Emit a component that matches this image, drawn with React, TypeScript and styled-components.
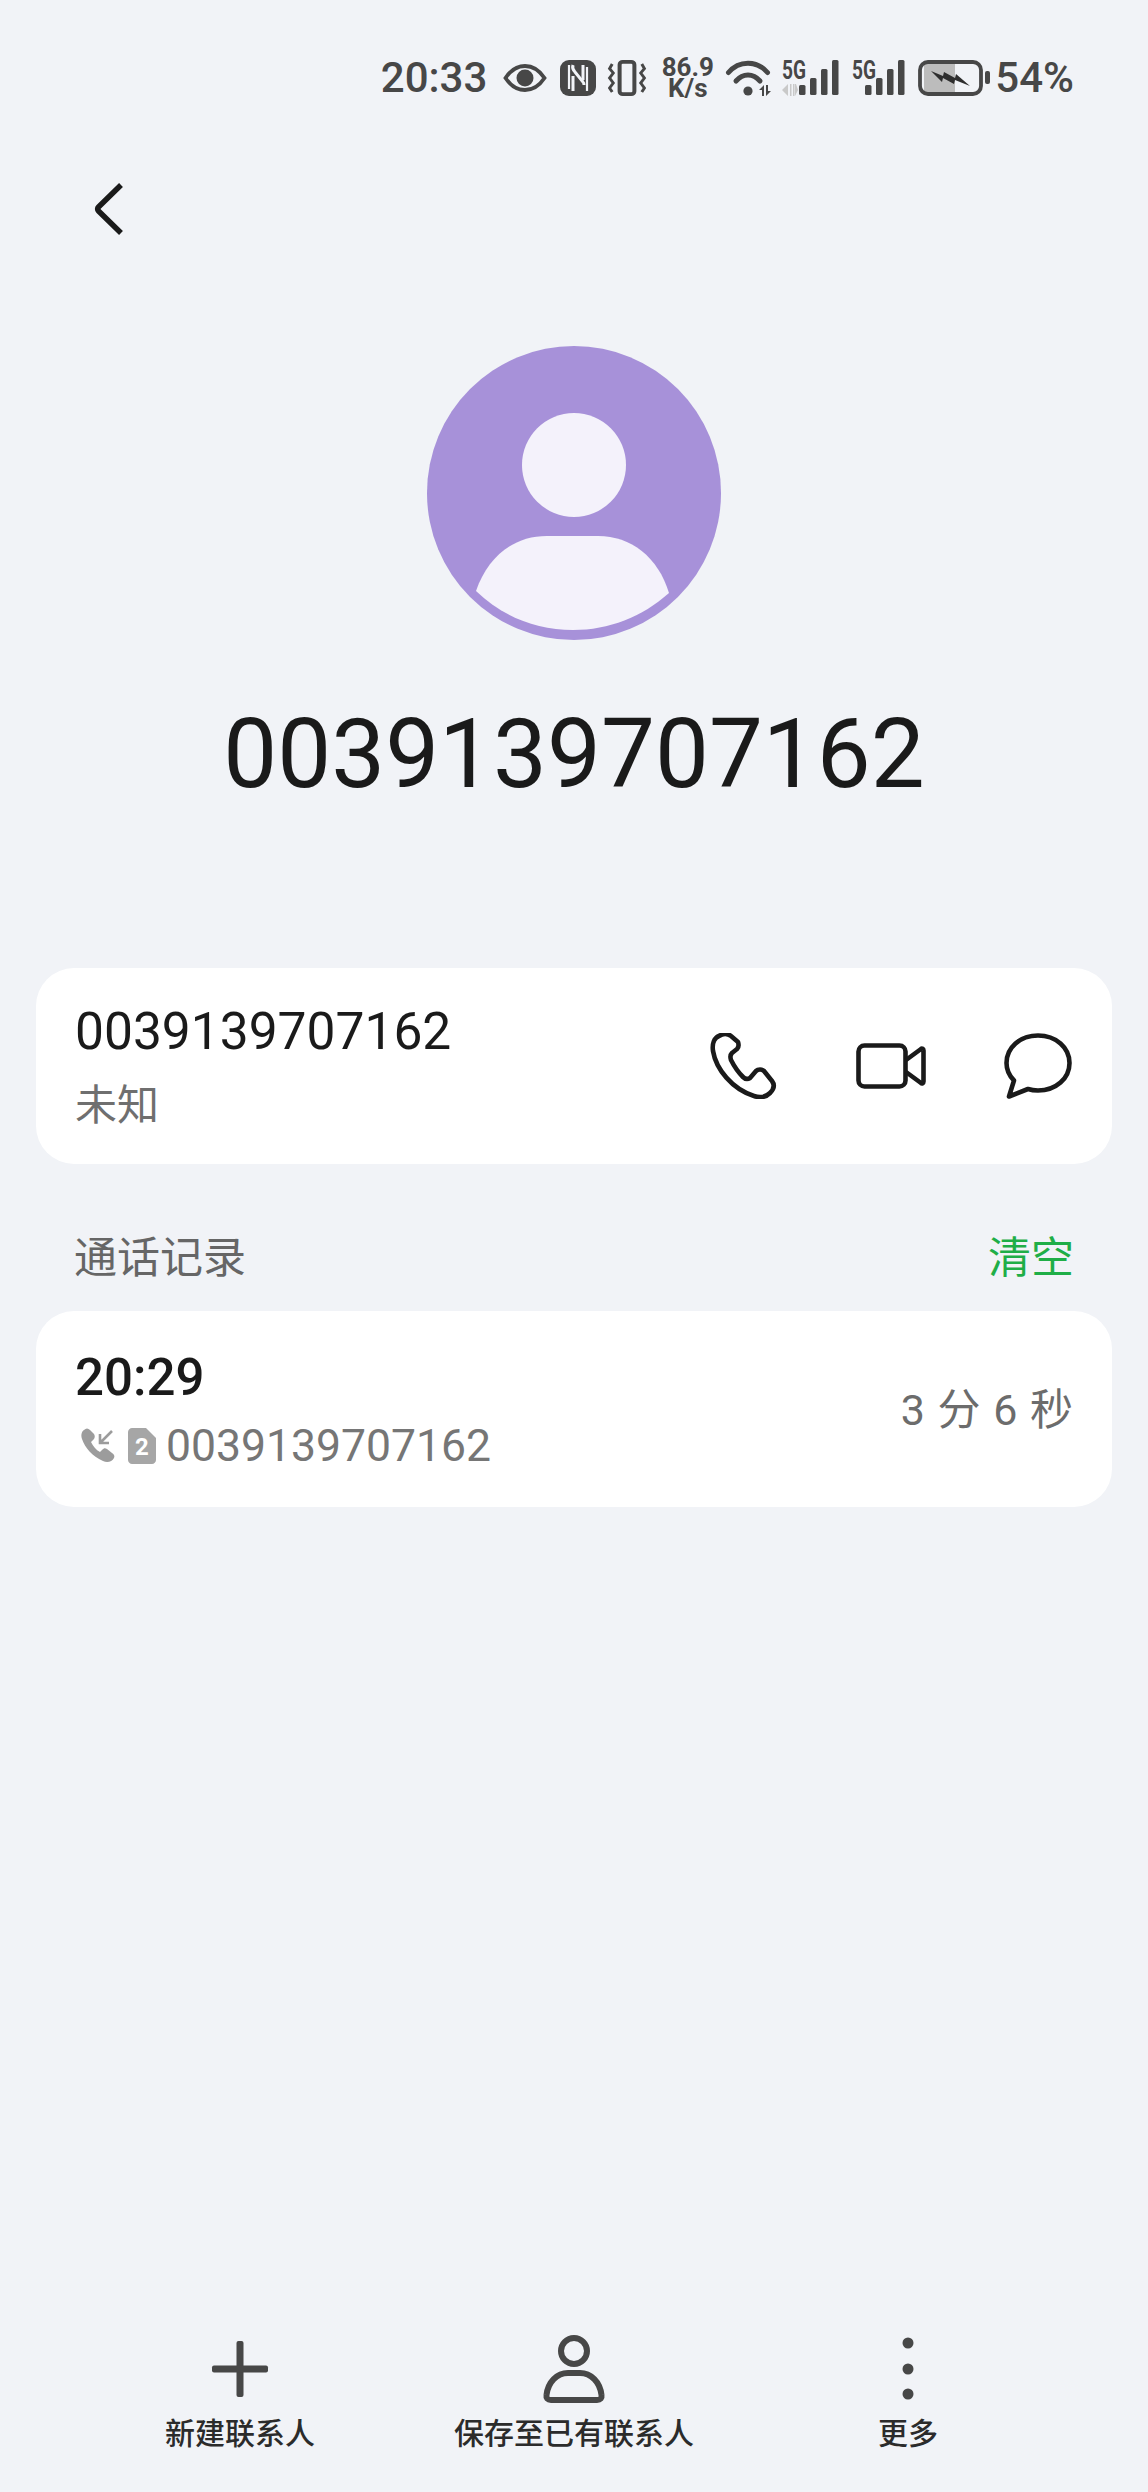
import React from "react";
import styled, { createGlobalStyle } from "styled-components";

const GlobalStyle = createGlobalStyle`
  html, body {
    margin: 0;
    padding: 0;
    background: #f1f3f7;
  }
  * {
    box-sizing: border-box;
  }
`;

const INK = "#1a1a1a";
const STATUS = "#474747";
const FONT = `Roboto, "Noto Sans CJK SC", sans-serif`;

const Page = styled.div`
  width: 1148px;
  height: 2492px;
  background: #f1f3f7;
  font-family: ${FONT};
  display: flex;
  flex-direction: column;
  overflow: hidden;
`;

const StatusBar = styled.div`
  height: 38px;
  margin-top: 59px;
  padding-right: 74px;
  display: flex;
  justify-content: flex-end;
  align-items: center;
  color: ${STATUS};
`;

const StatusText = styled.span<{ $left?: number }>`
  font-size: 42px;
  font-weight: 500;
  line-height: 38px;
  margin-left: ${(p) => p.$left ?? 0}px;
`;

const StatusIcon = styled.svg<{ $left: number }>`
  display: block;
  flex: none;
  overflow: visible;
  margin-left: ${(p) => p.$left}px;
`;

const Speed = styled.div`
  width: 51px;
  margin-left: 16px;
  display: flex;
  flex-direction: column;
  align-items: center;
  font-size: 26px;
  font-weight: 700;
  line-height: 21px;
`;

const BackButton = styled.button`
  width: 30px;
  height: 54px;
  margin: 85px 0 0 94px;
  padding: 0;
  border: 0;
  background: none;
  display: block;
`;

const Profile = styled.section`
  margin-top: 110px;
  display: flex;
  flex-direction: column;
  align-items: center;
`;

const Avatar = styled.svg`
  display: block;
  width: 294px;
  height: 294px;
`;

const Name = styled.h1`
  margin: 64px 0 0;
  font-size: 96px;
  font-weight: 400;
  line-height: 100px;
  color: ${INK};
`;

const Card = styled.div`
  margin: 0 36px;
  height: 196px;
  padding: 0 39px;
  border-radius: 38px;
  background: #fff;
  display: flex;
  justify-content: space-between;
  align-items: center;
`;

const ContactCard = styled(Card)`
  margin-top: 164px;
`;

const Stack = styled.div`
  display: flex;
  flex-direction: column;
`;

const ContactNumber = styled.div`
  font-size: 51.5px;
  line-height: 60px;
  color: ${INK};
`;

const ContactLabel = styled.div`
  margin-top: 19px;
  font-size: 42px;
  line-height: 50px;
  color: #6f6f6f;
`;

const Actions = styled.div`
  display: flex;
  align-items: center;
  gap: 78px;
  margin-right: 1px;
`;

const SectionHeader = styled.div`
  margin-top: 65px;
  padding: 0 74px;
  display: flex;
  justify-content: space-between;
  align-items: center;
  height: 50px;
  font-size: 43px;
`;

const SectionTitle = styled.span`
  color: #666;
`;

const ClearLink = styled.span`
  color: #1fae47;
`;

const RecordCard = styled(Card)`
  margin-top: 32px;
`;

const RecordTime = styled.div`
  font-size: 51px;
  font-weight: 500;
  line-height: 56px;
  color: ${INK};
`;

const RecordRow = styled.div`
  margin-top: 18px;
  display: flex;
  align-items: center;
  height: 44px;
  color: #767676;
  font-size: 44.5px;
`;

const RecordNumber = styled.span`
  margin-left: 10px;
`;

const Duration = styled.div`
  margin-top: -6px;
  font-size: 43px;
  color: #6c6c6c;
  word-spacing: 2px;
`;

const Toolbar = styled.nav`
  margin-top: auto;
  margin-bottom: 41px;
  padding: 0 73px;
  display: grid;
  grid-template-columns: repeat(3, 1fr);
`;

const ToolItem = styled.div`
  display: flex;
  flex-direction: column;
  align-items: center;
`;

const ToolIcon = styled.svg`
  display: block;
  width: 70px;
  height: 70px;
  color: ${STATUS};
`;

const ToolLabel = styled.span`
  margin-top: 12px;
  font-size: 30px;
  font-weight: 500;
  line-height: 34px;
  color: #2b2b2b;
`;

const Signal = ({ left, width, offset, muted }: { left: number; width: number; offset: number; muted?: boolean }) => (
  <StatusIcon $left={left} width={width} height={36} viewBox={`0 0 ${width} 36`} fill={STATUS}>
    <text x="0" y="19" fontFamily="Roboto" fontWeight="700" fontSize="25" textLength="24" lengthAdjust="spacingAndGlyphs">
      5G
    </text>
    {muted && <path d="M0 30l6-6v12zM8 24h1.5v12H8zM11 24h1.5v12H11zM14 24l-1 0v12l3-6z" fill="#c9c9c9" />}
    <rect x={offset} y="25" width="6.5" height="10" rx="1.5" />
    <rect x={offset + 11} y="18" width="6.5" height="17" rx="1.5" />
    <rect x={offset + 22} y="9" width="6.5" height="26" rx="1.5" />
    <rect x={offset + 33} y="0" width="6.5" height="35" rx="1.5" />
  </StatusIcon>
);

const App = () => {
  return (
    <Page>
      <GlobalStyle />
      <StatusBar>
        <StatusText>20:33</StatusText>
        <StatusIcon $left={16} width={44} height={28} viewBox="0 0 43 28">
          <path d="M2 14C8 5 14 2 21.5 2S35 5 41 14C35 23 29 26 21.5 26S8 23 2 14Z" fill="none" stroke={STATUS} strokeWidth="3.8" />
          <circle cx="21.5" cy="14" r="8.5" fill={STATUS} />
        </StatusIcon>
        <StatusIcon $left={13} width={36} height={36} viewBox="0 0 36 36">
          <rect x="0" y="0" width="36" height="36" rx="9" fill={STATUS} />
          <path d="M9 5V29M27 7V31" stroke="#f1f3f7" strokeWidth="2.2" fill="none" />
          <path d="M13 5c-1 3 0 5 2 7l8 10c1 1 1 2 1 3" stroke="#f1f3f7" strokeWidth="3" fill="none" />
          <path d="M13 16V31M23 5V20" stroke="#f1f3f7" strokeWidth="3" fill="none" />
        </StatusIcon>
        <StatusIcon $left={12} width={38} height={36} viewBox="0 0 36 36" preserveAspectRatio="none" fill="none" stroke={STATUS}>
          <rect x="11" y="1.8" width="14" height="32.4" rx="3" strokeWidth="3.8" />
          <path d="M4 4L1.5 8.5 5 13 1.5 18 5 23 1.5 28 4 32M32 4l2.5 4.500-3.500 4.500 3.500 5-3.500 5 3.500 5-2.500 4" strokeWidth="2.8" />
        </StatusIcon>
        <Speed>
          <span>86.9</span>
          <span>K/s</span>
        </Speed>
        <StatusIcon $left={13} width={46} height={36} viewBox="0 0 46 36" fill="none" stroke={STATUS}>
          <path d="M2.500 12.500C13 0 31 0 41.500 12.500" strokeWidth="5" strokeLinecap="round" />
          <path d="M10 21C17 13 27 13 34 21" strokeWidth="5" strokeLinecap="round" />
          <circle cx="22" cy="31" r="4.600" fill={STATUS} stroke="none" />
          <path d="M33 30l5-5v11h-2v-6zM40 25h2v6h3l-5 5z" fill={STATUS} stroke="none" />
        </StatusIcon>
        <Signal left={10} width={58} offset={17} muted />
        <Signal left={12} width={53} offset={13} />
        <StatusIcon $left={13} width={72} height={36} viewBox="0 0 72 36">
          <path d="M6 4h31v28H6z" fill="#bcbcbc" />
          <rect x="2" y="2" width="61" height="32" rx="8" fill="none" stroke={STATUS} strokeWidth="3.800" />
          <path d="M13 11l12 5 1-4 11 6 1-4 14 12-15-6-1 4-11-6-1 4z" fill="#2e2e2e" />
          <rect x="67" y="11" width="5" height="13" rx="2" fill={STATUS} />
        </StatusIcon>
        <StatusText $left={5}>54%</StatusText>
      </StatusBar>

      <BackButton aria-label="返回">
        <svg width="30" height="54" viewBox="0 0 30 54" fill="none">
          <path d="M27 3L4.500 25c-1.200 1.200-1.200 2.800 0 4L27 51" stroke={INK} strokeWidth="5.500" />
        </svg>
      </BackButton>

      <Profile>
        <Avatar viewBox="0 0 294 294">
          <circle cx="147" cy="147" r="147" fill="#a791d9" />
          <circle cx="147" cy="119" r="52" fill="#f4f2fb" />
          <path d="M49 245C61 210 87 190 120 190H171C204 190 231 211 242 247C215 271 182 284 146 284C109 284 75 270 49 245Z" fill="#f4f2fb" />
        </Avatar>
        <Name>0039139707162</Name>
      </Profile>

      <ContactCard>
        <Stack>
          <ContactNumber>0039139707162</ContactNumber>
          <ContactLabel>未知</ContactLabel>
        </Stack>
        <Actions>
          <svg width="68" height="66" viewBox="0 0 68 66" fill="none" stroke={INK} strokeWidth="4.600" strokeLinejoin="round">
            <path d="M9 3C4 5 2 11 3 18C6 36 22 56 44 63C50 65 56 64 60 60C64 56 65 52 62 48L54 38C52 36 48 36 46 38L40 45C37 47 35 46 33 44C28 39 24 33 21 27C20 24 20 22 22 20L27 16C29 14 29 12 28 9L21 3C17 0 12 1 9 3Z" />
          </svg>
          <svg width="70" height="46" viewBox="0 0 70 46" fill="none" stroke={INK} strokeWidth="4.600" strokeLinejoin="round">
            <rect x="2.500" y="2.500" width="47" height="41" rx="6" />
            <path d="M50 17L65 6C66 5 67.500 6 67.500 7.500V38.500C67.500 40 66 41 65 40L50 29" />
          </svg>
          <svg width="68" height="66" viewBox="0 0 68 66" fill="none" stroke={INK} strokeWidth="4.600" strokeLinejoin="round">
            <path d="M34 2.500C16 2.500 2.500 14.500 2.500 30C2.500 37 5.500 43 10 47.500L5 63.500L24 56C27 57 30.500 57.500 34 57.500C52 57.500 65.500 45.500 65.500 30C65.500 14.500 52 2.500 34 2.500Z" />
          </svg>
        </Actions>
      </ContactCard>

      <SectionHeader>
        <SectionTitle>通话记录</SectionTitle>
        <ClearLink>清空</ClearLink>
      </SectionHeader>

      <RecordCard>
        <Stack>
          <RecordTime>20:29</RecordTime>
          <RecordRow>
            <StatusIcon $left={6} width={34} height={34} viewBox="0 0 34 34">
              <path d="M3 1C0 3 0 7 1 10C4 19 11 27 22 32C26 34 31 33 33 29C34 27 33 25 31 24L26 20C24 19 23 19 21 21L19 23C15 21 12 17 10 13L13 10C14 8 14 7 13 5L9 1C7-1 5-1 3 1Z" fill="#9c9c9c" />
              <path d="M31 2L19 14M19 5V14H28" fill="none" stroke="#9c9c9c" strokeWidth="2.600" />
            </StatusIcon>
            <StatusIcon $left={13} width={28} height={36} viewBox="0 0 28 36">
              <path d="M4 0H18L28 10V32C28 34 26 36 24 36H4C2 36 0 34 0 32V4C0 2 2 0 4 0Z" fill="#a6a6a6" />
              <text x="14" y="27" textAnchor="middle" fontFamily="Roboto" fontWeight="700" fontSize="24" fill="#fff">
                2
              </text>
            </StatusIcon>
            <RecordNumber>0039139707162</RecordNumber>
          </RecordRow>
        </Stack>
        <Duration>3 分 6 秒</Duration>
      </RecordCard>

      <Toolbar>
        <ToolItem>
          <ToolIcon viewBox="0 0 70 70" fill="currentColor">
            <rect x="31.500" y="6" width="7" height="56" rx="2" />
            <rect x="7" y="30.500" width="56" height="7" rx="2" />
          </ToolIcon>
          <ToolLabel>新建联系人</ToolLabel>
        </ToolItem>
        <ToolItem>
          <ToolIcon viewBox="0 0 70 70" fill="none" stroke="currentColor" strokeWidth="6">
            <ellipse cx="35" cy="16" rx="13" ry="13" />
            <path d="M12 65C8.500 65 7 63 7.500 60C9 47 18 38 29 38H41C52 38 61 47 62.500 60C63 63 61.500 65 58 65Z" strokeLinejoin="round" />
          </ToolIcon>
          <ToolLabel>保存至已有联系人</ToolLabel>
        </ToolItem>
        <ToolItem>
          <ToolIcon viewBox="0 0 70 70" fill="currentColor">
            <circle cx="35" cy="8" r="5.500" />
            <circle cx="35" cy="34" r="5.500" />
            <circle cx="35" cy="59" r="5.500" />
          </ToolIcon>
          <ToolLabel>更多</ToolLabel>
        </ToolItem>
      </Toolbar>
    </Page>
  );
};

export default App;
